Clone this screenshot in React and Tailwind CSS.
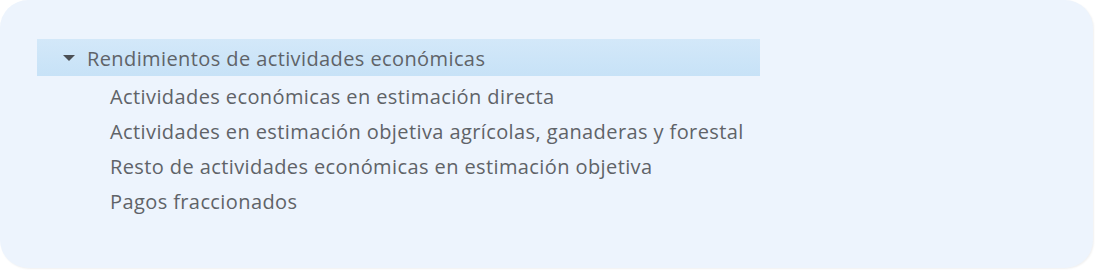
import React from 'react';

const ITEMS = [
  'Actividades económicas en estimación directa',
  'Actividades en estimación objetiva agrícolas, ganaderas y forestal',
  'Resto de actividades económicas en estimación objetiva',
  'Pagos fraccionados',
];

export default function App() {
  return (
    <div className="w-[1095px] h-[270px] bg-white" style={{ fontFamily: '"Open Sans", "Noto Sans", sans-serif' }}>
      <div className="w-[1093px] h-[268px] rounded-[28px] bg-[#edf4fd] pt-[39px] pl-[37px] shadow-[1px_1px_2px_rgba(0,0,0,0.06)]">
        <div className="w-[723px] h-[37px] flex items-center pt-[2px] bg-gradient-to-b from-[#d3e8f9] to-[#c7e2f7] text-[#5f6368] text-[20px] tracking-[0.4px]">
          <svg width="12" height="6" viewBox="0 0 12 6" className="ml-[26px] mr-[12px] -mt-[1px]">
            <path d="M0 0 H12 L6 6 Z" fill="#4b4f54" />
          </svg>
          <span>Rendimientos de actividades económicas</span>
        </div>
        <ul className="pt-[3px]">
          {ITEMS.map((t) => (
            <li key={t} className="h-[35px] flex items-center pl-[73px] text-[20px] tracking-[0.4px] text-[#5f6368]">{t}</li>
          ))}
        </ul>
      </div>
    </div>
  );
}
